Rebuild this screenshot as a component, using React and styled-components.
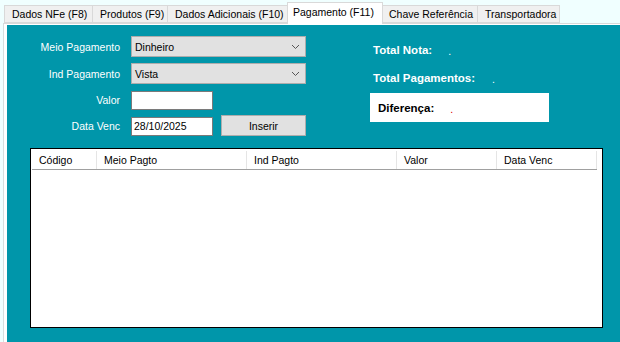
import React from "react";
import styled, { createGlobalStyle } from "styled-components";

const GlobalStyle = createGlobalStyle`
  html, body {
    margin: 0;
    padding: 0;
    background: #f0ffff;
  }
  * {
    box-sizing: border-box;
  }
`;

const Window = styled.div`
  width: 620px;
  height: 342px;
  display: flex;
  flex-direction: column;
  font-family: "Liberation Sans", Arial, sans-serif;
  font-size: 10.5px;
  color: #000;
  overflow: hidden;
`;

const TabStrip = styled.div`
  height: 23px;
  display: flex;
  align-items: flex-end;
  padding-left: 4px;
  position: relative;
  z-index: 1;
`;

const Tab = styled.div`
  width: ${props => props.width}px;
  height: ${props => (props.active ? 22 : 18)}px;
  margin-left: ${props => (props.first ? "0" : "-1px")};
  margin-right: ${props => (props.active ? "-1px" : "0")};
  margin-bottom: ${props => (props.active ? "-1px" : "0")};
  background: ${props => (props.active ? "#fff" : "#f0f0f0")};
  border: 1px solid #d9d9d9;
  border-bottom: ${props => (props.active ? "none" : "1px solid #d9d9d9")};
  display: flex;
  align-items: ${props => (props.active ? "flex-start" : "center")};
  padding: ${props => (props.active ? "3px 0 0 5px" : "0 0 0 7px")};
  white-space: nowrap;
  position: relative;
  z-index: ${props => (props.active ? 2 : 1)};
`;

const Page = styled.div`
  flex: 1;
  margin-left: 3px;
  border-left: 1px solid #d6dede;
  border-top: 1px solid #d9d9d9;
  background: #fff;
  padding: 1px 0 0 3px;
  display: flex;
`;

const Teal = styled.div`
  flex: 1;
  background: #0096aa;
  display: flex;
  flex-direction: column;
`;

const Top = styled.div`
  display: flex;
  padding-top: 11px;
`;

const Form = styled.div`
  display: flex;
  flex-direction: column;
  gap: 6px;
  width: 300px;
`;

const Row = styled.div`
  display: flex;
  align-items: center;
  height: ${props => props.h || 21}px;
`;

const Label = styled.div`
  width: 113px;
  margin-right: 11px;
  text-align: right;
  color: #fff;
  white-space: nowrap;
`;

const Select = styled.div`
  width: 175px;
  height: 21px;
  background: #e1e1e1;
  border: 1px solid #adadad;
  display: flex;
  align-items: center;
  justify-content: space-between;
  padding: 0 5px 0 3px;
`;

const Input = styled.div`
  width: 82px;
  height: 19px;
  background: #fff;
  border: 1px solid #7a7a7a;
  display: flex;
  align-items: center;
  padding-left: 2px;
`;

const Button = styled.div`
  width: 85px;
  height: 21px;
  margin-left: 8px;
  margin-top: -1px;
  background: #e1e1e1;
  border: 1px solid #adadad;
  display: flex;
  align-items: center;
  justify-content: center;
`;

const Totals = styled.div`
  margin-left: 63px;
  padding-top: 4px;
  display: flex;
  flex-direction: column;
`;

const TotalLine = styled.div`
  height: 20px;
  display: flex;
  align-items: center;
  padding-left: 3px;
  margin-bottom: ${props => props.mb || 0}px;
  color: #fff;
  font-weight: bold;
  font-size: 11.5px;
`;

const DiffBox = styled.div`
  width: 179px;
  height: 29px;
  background: #fff;
  display: flex;
  align-items: center;
  padding-left: 8px;
  font-weight: bold;
  font-size: 11.5px;
`;

const Value = styled.span`
  margin-left: ${props => props.gap || 16}px;
  margin-top: 2px;
  font-weight: normal;
  font-size: 10.5px;
  color: ${props => props.color || "#fff"};
`;

const List = styled.div`
  margin: 12px 17px 14px 23px;
  flex: 1;
  background: #fff;
  border: 1px solid #000;
  padding: 2px 0 0 1px;
`;

const HeaderRow = styled.div`
  display: flex;
  height: 19px;
  border-bottom: 1px solid #a0a0a0;
  width: 565px;
`;

const HeaderCell = styled.div`
  width: ${props => props.width}px;
  border-right: 1px solid #e5e5e5;
  padding-left: 7px;
  display: flex;
  align-items: center;
`;

const Chevron = () => (
  <svg width="9" height="6" viewBox="0 0 9 6">
    <path d="M1 1 L4.5 4.5 L8 1" fill="none" stroke="#555" strokeWidth="1" />
  </svg>
);

const tabs = [
  { label: "Dados NFe (F8)", width: 89 },
  { label: "Produtos (F9)", width: 76 },
  { label: "Dados Adicionais (F10)", width: 121 },
  { label: "Pagamento (F11)", width: 96, active: true },
  { label: "Chave Referência", width: 97 },
  { label: "Transportadora", width: 83 }
];

const columns = [
  { label: "Código", width: 65 },
  { label: "Meio Pagto", width: 150 },
  { label: "Ind Pagto", width: 150 },
  { label: "Valor", width: 100 },
  { label: "Data Venc", width: 100 }
];

const App = () => {
  return (
    <>
      <GlobalStyle />
      <Window>
        <TabStrip>
          {tabs.map((t, i) => (
            <Tab key={t.label} width={t.width} active={t.active} first={i === 0}>
              {t.label}
            </Tab>
          ))}
        </TabStrip>
        <Page>
          <Teal>
            <Top>
              <Form>
                <Row>
                  <Label>Meio Pagamento</Label>
                  <Select>
                    <span>Dinheiro</span>
                    <Chevron />
                  </Select>
                </Row>
                <Row>
                  <Label>Ind Pagamento</Label>
                  <Select>
                    <span>Vista</span>
                    <Chevron />
                  </Select>
                </Row>
                <Row h={20}>
                  <Label>Valor</Label>
                  <Input />
                </Row>
                <Row h={20}>
                  <Label>Data Venc</Label>
                  <Input>28/10/2025</Input>
                  <Button>Inserir</Button>
                </Row>
              </Form>
              <Totals>
                <TotalLine mb={8}>
                  Total Nota:<Value>.</Value>
                </TotalLine>
                <TotalLine mb={5}>
                  Total Pagamentos:<Value gap={17}>.</Value>
                </TotalLine>
                <DiffBox>
                  Diferença:<Value gap={16} color="#e00000">.</Value>
                </DiffBox>
              </Totals>
            </Top>
            <List>
              <HeaderRow>
                {columns.map(c => (
                  <HeaderCell key={c.label} width={c.width}>
                    {c.label}
                  </HeaderCell>
                ))}
              </HeaderRow>
            </List>
          </Teal>
        </Page>
      </Window>
    </>
  );
};

export default App;
